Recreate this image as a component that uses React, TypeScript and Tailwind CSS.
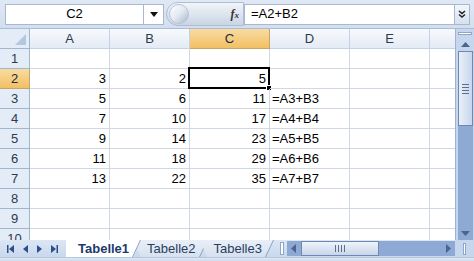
import React from "react";

const cols = ["A", "B", "C", "D", "E"];
const data: Record<number, (string | number)[]> = {
  2: [3, 2, 5, ""],
  3: [5, 6, 11, "=A3+B3"],
  4: [7, 10, 17, "=A4+B4"],
  5: [9, 14, 23, "=A5+B5"],
  6: [11, 18, 29, "=A6+B6"],
  7: [13, 22, 35, "=A7+B7"],
};

function Row({ n }: { n: number }) {
  const d = data[n] || ["", "", "", ""];
  const sel = n === 2;
  return (
    <div className="flex h-[20px] shrink-0">
      <div
        className={`w-[30px] shrink-0 flex items-center justify-center border-r border-b text-[13px] ${
          sel
            ? "bg-gradient-to-b from-[#f9dba1] to-[#f1c062] border-[#c5a666] text-[#1e2b3c]"
            : "bg-[#e4ecf7] border-[#9eb6ce] text-[#2b3a4f]"
        }`}
      >
        {n}
      </div>
      {[0, 1, 2, 3, 4].map((i) => (
        <div
          key={i}
          className={`relative w-[80px] shrink-0 border-r border-b border-[#d0d7e5] flex items-center text-[13px] text-black ${
            i === 3 ? "justify-start pl-[2px]" : "justify-end pr-[3px]"
          }`}
        >
          {i < 4 ? d[i] : ""}
          {sel && i === 2 && (
            <div className="absolute -left-[2px] -top-[2px] -right-[1px] -bottom-[1px] border-[2px] border-black">
              <div className="absolute -right-[4px] -bottom-[4px] w-[6px] h-[6px] bg-black border border-white" />
            </div>
          )}
        </div>
      ))}
      <div className="flex-1 border-b border-[#d0d7e5]" />
    </div>
  );
}

function Tab({ label, active }: { label: string; active?: boolean }) {
  return (
    <div className={`relative -ml-[8px] h-[17px] ${active ? "z-10" : ""}`}>
      <div
        className={`h-[17px] flex items-center text-[13px] ${
          active
            ? "bg-white font-bold text-[#1c3a6e] pl-[12px] pr-[12px] [clip-path:polygon(0_0,100%_0,calc(100%-8px)_100%,0_100%)]"
            : "bg-gradient-to-b from-[#e9eff7] to-[#d6e1f0] text-[#2a3f5f] pl-[14px] pr-[12px] [clip-path:polygon(0_0,100%_0,calc(100%-8px)_100%,8px_100%)]"
        }`}
      >
        {label}
      </div>
      <svg className="absolute right-0 top-0" width="9" height="17" viewBox="0 0 9 17">
        <path d="M8.5 0 L0.5 17" stroke="#8aa0c2" strokeWidth="1" fill="none" />
      </svg>
    </div>
  );
}

export default function App() {
  return (
    <div
      className="w-[474px] h-[261px] flex flex-col overflow-hidden bg-[#d6e2f2]"
      style={{ fontFamily: '"Liberation Sans", Arial, sans-serif' }}
    >
      {/* Formula bar */}
      <div className="h-[29px] shrink-0 flex items-center bg-gradient-to-b from-[#dfe8f5] to-[#d3dfef] border-b border-[#a9bcd8] pl-[5px] pr-[4px]">
        <div className="w-[139px] h-[21px] bg-white border border-[#a7b8d0] flex items-center justify-center text-[13px] text-black">
          C2
        </div>
        <div className="w-[20px] h-[21px] bg-white border-y border-r border-[#a7b8d0] flex items-center justify-center">
          <svg width="8" height="5" viewBox="0 0 8 5">
            <path d="M0 0 H8 L4 5 Z" fill="#111" />
          </svg>
        </div>
        <div className="ml-[2px] h-[24px] w-[78px] rounded-l-full bg-gradient-to-b from-[#f2f5f9] to-[#c9d5e4] border border-[#aebdd2] flex items-center">
          <div className="ml-[2px] w-[20px] h-[20px] rounded-full bg-gradient-to-br from-[#ffffff] via-[#e3e9f1] to-[#a9b8cb] border border-[#b7c4d6]" />
          <span className="ml-auto mr-[4px] text-[12px] italic font-bold text-[#333]" style={{ fontFamily: '"Liberation Serif", serif' }}>
            f<span className="text-[9px]">x</span>
          </span>
        </div>
        <div className="flex-1 h-[21px] bg-white border border-[#a7b8d0] flex items-center pl-[6px] text-[13px] text-black">
          =A2+B2
        </div>
        <div className="w-[15px] h-[21px] bg-gradient-to-b from-[#f2f6fb] to-[#d6e1ef] border-y border-r border-[#a7b8d0] flex items-center justify-center">
          <svg width="8" height="8" viewBox="0 0 8 8">
            <path d="M1 1 L4 3.5 L7 1 M1 4.5 L4 7 L7 4.5" stroke="#222" strokeWidth="1.5" fill="none" />
          </svg>
        </div>
      </div>

      {/* Grid + vertical scrollbar */}
      <div className="flex h-[211px] shrink-0">
        <div className="w-[455px] shrink-0 flex flex-col bg-white overflow-hidden">
          <div className="flex h-[20px] shrink-0">
            <div className="w-[30px] shrink-0 bg-[#e4ecf7] border-r border-b border-[#9eb6ce] flex items-end justify-end p-[3px]">
              <svg width="11" height="11" viewBox="0 0 11 11">
                <path d="M11 0 V11 H0 Z" fill="#b4c6e0" />
              </svg>
            </div>
            {cols.map((c) => (
              <div
                key={c}
                className={`w-[80px] shrink-0 border-r border-b flex items-center justify-center text-[13px] ${
                  c === "C"
                    ? "bg-gradient-to-b from-[#f9dba1] to-[#f1c062] border-[#c5a666] text-[#1e2b3c]"
                    : "bg-gradient-to-b from-[#f7f9fc] to-[#e4ebf5] border-[#c5d2e3] text-[#2b3a4f]"
                }`}
              >
                {c}
              </div>
            ))}
            <div className="flex-1 bg-gradient-to-b from-[#f7f9fc] to-[#e4ebf5] border-b border-[#c5d2e3]" />
          </div>
          {Array.from({ length: 10 }, (_, i) => (
            <Row key={i} n={i + 1} />
          ))}
        </div>
        <div className="flex-1 flex flex-col items-center bg-[#c6d6ed] border-l border-[#9fb3d1]">
          <div className="mt-[3px] w-[14px] h-[3px] bg-white border border-[#8ea6c8]" />
          <div className="mt-[2px] w-[15px] h-[14px] flex items-center justify-center">
            <svg width="9" height="5" viewBox="0 0 9 5">
              <path d="M0 5 L4.5 0 L9 5 Z" fill="#4a6590" />
            </svg>
          </div>
          <div className="w-[15px] flex-1 flex flex-col bg-[#8ea9d3]">
            <div className="h-[75px] bg-gradient-to-r from-[#e9eff8] to-[#c8d7ec] border border-[#6e88b3] flex flex-col items-center justify-center gap-[2px]">
              <div className="w-[7px] h-px bg-[#5b6f8e]" />
              <div className="w-[7px] h-px bg-[#5b6f8e]" />
              <div className="w-[7px] h-px bg-[#5b6f8e]" />
              <div className="w-[7px] h-px bg-[#5b6f8e]" />
            </div>
          </div>
          <div className="w-[15px] h-[14px] bg-[#8ea9d3] flex items-center justify-center">
            <svg width="9" height="5" viewBox="0 0 9 5">
              <path d="M0 0 L4.5 5 L9 0 Z" fill="#4a6590" />
            </svg>
          </div>
        </div>
      </div>

      {/* Tabs bar */}
      <div className="h-[17px] shrink-0 flex items-center bg-gradient-to-b from-[#dce6f4] to-[#c9d8ed]">
        <div className="w-[66px] shrink-0 flex items-center gap-[9px] pl-[7px]">
          <svg width="7" height="8" viewBox="0 0 7 8">
            <path d="M0 0 H1.5 V8 H0 Z M7 0 V8 L2 4 Z" fill="#2c4f8c" />
          </svg>
          <svg width="5" height="8" viewBox="0 0 5 8">
            <path d="M5 0 V8 L0 4 Z" fill="#2c4f8c" />
          </svg>
          <svg width="5" height="8" viewBox="0 0 5 8">
            <path d="M0 0 V8 L5 4 Z" fill="#2c4f8c" />
          </svg>
          <svg width="7" height="8" viewBox="0 0 7 8">
            <path d="M0 0 V8 L5 4 Z M5.5 0 H7 V8 H5.5 Z" fill="#2c4f8c" />
          </svg>
        </div>
        <div className="flex items-center pl-[8px]">
          <Tab label="Tabelle1" active />
          <Tab label="Tabelle2" />
          <Tab label="Tabelle3" />
          <div className="-ml-[8px] w-[14px] h-[17px]" />
        </div>
        <div className="w-[4px] h-[13px] bg-white border border-[#8ea6c8]" />
        <div className="flex-1 h-[15px] flex items-center bg-[#8ea9d3] ml-[3px]">
          <div className="w-[14px] flex justify-center">
            <svg width="5" height="9" viewBox="0 0 5 9">
              <path d="M5 0 V9 L0 4.5 Z" fill="#4a6590" />
            </svg>
          </div>
          <div className="w-[78px] h-[15px] bg-gradient-to-b from-[#eef3fa] to-[#c8d6ea] border border-[#6e88b3] flex items-center justify-center gap-[2px]">
            <div className="w-px h-[7px] bg-[#5b6f8e]" />
            <div className="w-px h-[7px] bg-[#5b6f8e]" />
            <div className="w-px h-[7px] bg-[#5b6f8e]" />
            <div className="w-px h-[7px] bg-[#5b6f8e]" />
          </div>
          <div className="flex-1" />
          <div className="w-[14px] flex justify-center">
            <svg width="5" height="9" viewBox="0 0 5 9">
              <path d="M0 0 V9 L5 4.5 Z" fill="#4a6590" />
            </svg>
          </div>
        </div>
        <div className="w-[19px] h-[17px] bg-[#c6d6ed] flex items-center justify-center">
          <div className="w-[3px] h-[12px] bg-white border border-[#8ea6c8]" />
        </div>
      </div>
      <div className="flex-1 bg-gradient-to-b from-[#dfe8f4] to-[#cfdcee] border-t border-[#b4c5de]" />
    </div>
  );
}
